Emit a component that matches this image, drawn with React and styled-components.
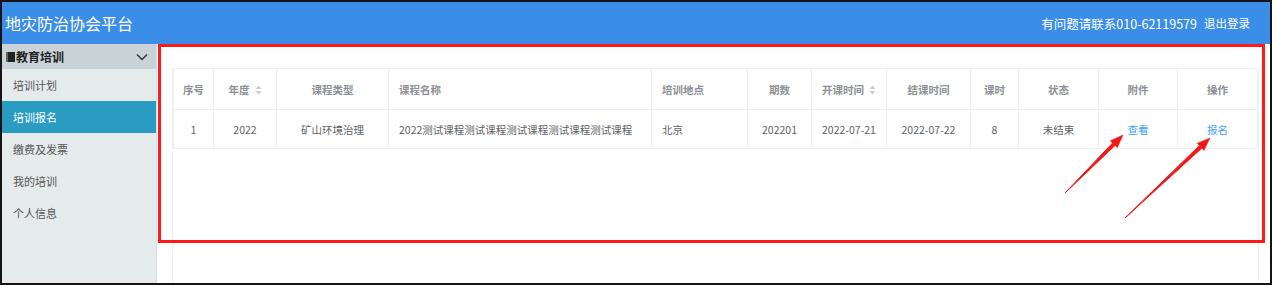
import styled, { createGlobalStyle } from 'styled-components'

const GlobalStyle = createGlobalStyle`
  body {
    margin: 0;
    background: #fff;
    font-family: "Noto Sans CJK SC", "Liberation Sans", sans-serif;
  }
`;

const Frame = styled.div`
  position: relative;
  width: 1272px;
  height: 285px;
  border: 2px solid #141414;
  box-sizing: border-box;
  display: flex;
  flex-direction: column;
  overflow: hidden;
`;

const TopBar = styled.header`
  height: 42px;
  flex: none;
  background: #3b8ee8;
  color: #fff;
  display: flex;
  align-items: center;
  justify-content: space-between;
  padding: 0 20px 0 3px;
`;

const Title = styled.h1`
  margin: 0;
  font-size: 16px;
  font-weight: 400;
`;

const Contact = styled.div`
  display: flex;
  align-items: center;
  gap: 7px;
  font-size: 12.5px;
`;

const Logout = styled.span`
  font-size: 11.5px;
`;

const Body = styled.div`
  flex: 1;
  display: flex;
  min-height: 0;
`;

const Side = styled.nav`
  width: 154px;
  flex: none;
  background: #e5eaeb;
  border-right: 1px solid #d8dfe1;
`;

const Group = styled.div`
  height: 25px;
  background: #c9d3d7;
  display: flex;
  align-items: center;
  padding: 0 8px 0 4px;
  font-size: 12px;
  font-weight: 700;
  color: #222;
`;

const Book = styled.span`
  width: 7px;
  height: 10px;
  background: #222;
  border-left: 2px solid #666;
  margin-right: 1px;
`;

const Chevron = styled.svg`
  margin-left: auto;
`;

const Item = styled.div`
  height: 32px;
  display: flex;
  align-items: center;
  padding-left: 11px;
  font-size: 11px;
  color: ${p => (p.$active ? '#fff' : '#555')};
  background: ${p => (p.$active ? '#2a9bc1' : 'transparent')};
`;

const Main = styled.main`
  flex: 1;
  background: #fff;
  padding: 24px 13px 0 15px;
  display: flex;
`;

const Card = styled.div`
  flex: 1;
  border-left: 1px solid #eef0f4;
  border-right: 1px solid #eef0f4;
`;

const Table = styled.table`
  width: 100%;
  border-collapse: collapse;
  table-layout: fixed;
  font-size: 10.5px;
`;

const Th = styled.th`
  height: 40px;
  padding: 0 ${p => (p.$left ? '10px' : '4px')};
  border: 1px solid #eef0f4;
  color: #8d9095;
  font-weight: 700;
  text-align: ${p => (p.$left ? 'left' : 'center')};
  white-space: nowrap;
`;

const Td = styled.td`
  height: 38px;
  padding: 0 ${p => (p.$left ? '10px' : '4px')};
  border: 1px solid #eef0f4;
  color: #606266;
  text-align: ${p => (p.$left ? 'left' : 'center')};
  white-space: nowrap;
  overflow: hidden;
`;

const Link = styled.span`
  color: #409eff;
  font-size: 10.5px;
`;

const Sort = styled.svg`
  margin-left: 5px;
  vertical-align: -1px;
`;

const Mark = styled.div`
  position: absolute;
  left: 156px;
  top: 42px;
  width: 1107px;
  height: 199px;
  border: 3px solid #ff1a1a;
  box-sizing: border-box;
  pointer-events: none;
`;

const Arrows = styled.svg`
  position: absolute;
  left: 0;
  top: 0;
  pointer-events: none;
`;

const SortIcon = () => (
  <Sort width="7" height="10" viewBox="0 0 7 10">
    <path d="M3.5 0.5L6.5 4H0.5z M3.5 9.5L0.5 6h6z" fill="#c8cbd1" />
  </Sort>
);

const cols = [
  { key: 'no', label: '序号', w: 40 },
  { key: 'year', label: '年度', w: 63, sort: true },
  { key: 'type', label: '课程类型', w: 112 },
  { key: 'name', label: '课程名称', w: 263, left: true },
  { key: 'place', label: '培训地点', w: 96, left: true },
  { key: 'term', label: '期数', w: 64 },
  { key: 'start', label: '开课时间', w: 75, sort: true },
  { key: 'end', label: '结课时间', w: 84 },
  { key: 'hours', label: '课时', w: 48 },
  { key: 'state', label: '状态', w: 80 },
  { key: 'file', label: '附件', w: 79 },
  { key: 'op', label: '操作', w: 80 },
];

const rows = [
  {
    no: '1',
    year: '2022',
    type: '矿山环境治理',
    name: '2022测试课程测试课程测试课程测试课程测试课程',
    place: '北京',
    term: '202201',
    start: '2022-07-21',
    end: '2022-07-22',
    hours: '8',
    state: '未结束',
    file: <Link>查看</Link>,
    op: <Link>报名</Link>,
  },
];

const menu = ['培训计划', '培训报名', '缴费及发票', '我的培训', '个人信息'];

const Arrow = ({ x1, y1, x2, y2 }) => {
  const a = Math.atan2(y2 - y1, x2 - x1);
  const len = 13;
  const wid = 5;
  const bx = x2 - len * Math.cos(a);
  const by = y2 - len * Math.sin(a);
  const px = -Math.sin(a) * wid;
  const py = Math.cos(a) * wid;
  return (
    <g fill="#f21818" stroke="#f21818">
      <path d={`M${x1} ${y1} L${bx + px * 0.35} ${by + py * 0.35} L${bx - px * 0.35} ${by - py * 0.35}Z`} strokeWidth="1" />
      <path d={`M${x2} ${y2} L${bx + px} ${by + py} L${bx - px} ${by - py}Z`} strokeWidth="0.5" />
    </g>
  );
};

const App = () => {
  return (
    <>
      <GlobalStyle />
      <Frame>
        <TopBar>
          <Title>地灾防治协会平台</Title>
          <Contact>
            <span>有问题请联系010-62119579</span>
            <Logout>退出登录</Logout>
          </Contact>
        </TopBar>
        <Body>
          <Side>
            <Group>
              <Book />
              教育培训
              <Chevron width="12" height="8" viewBox="0 0 12 8">
                <path d="M1 1.5l5 5 5-5" fill="none" stroke="#333" strokeWidth="1.4" />
              </Chevron>
            </Group>
            {menu.map(m => (
              <Item key={m} $active={m === '培训报名'}>{m}</Item>
            ))}
          </Side>
          <Main>
            <Card>
              <Table>
                <colgroup>
                  {cols.map(c => <col key={c.key} style={{ width: c.w }} />)}
                </colgroup>
                <thead>
                  <tr>
                    {cols.map(c => (
                      <Th key={c.key} $left={c.left}>
                        {c.label}
                        {c.sort && <SortIcon />}
                      </Th>
                    ))}
                  </tr>
                </thead>
                <tbody>
                  {rows.map(r => (
                    <tr key={r.no}>
                      {cols.map(c => (
                        <Td key={c.key} $left={c.left}>{r[c.key]}</Td>
                      ))}
                    </tr>
                  ))}
                </tbody>
              </Table>
            </Card>
          </Main>
        </Body>
        <Mark />
        <Arrows width="1272" height="285">
          <Arrow x1={1063} y1={191} x2={1121} y2={133} />
          <Arrow x1={1123} y1={216} x2={1208} y2={136} />
        </Arrows>
      </Frame>
    </>
  );
};

export default App
